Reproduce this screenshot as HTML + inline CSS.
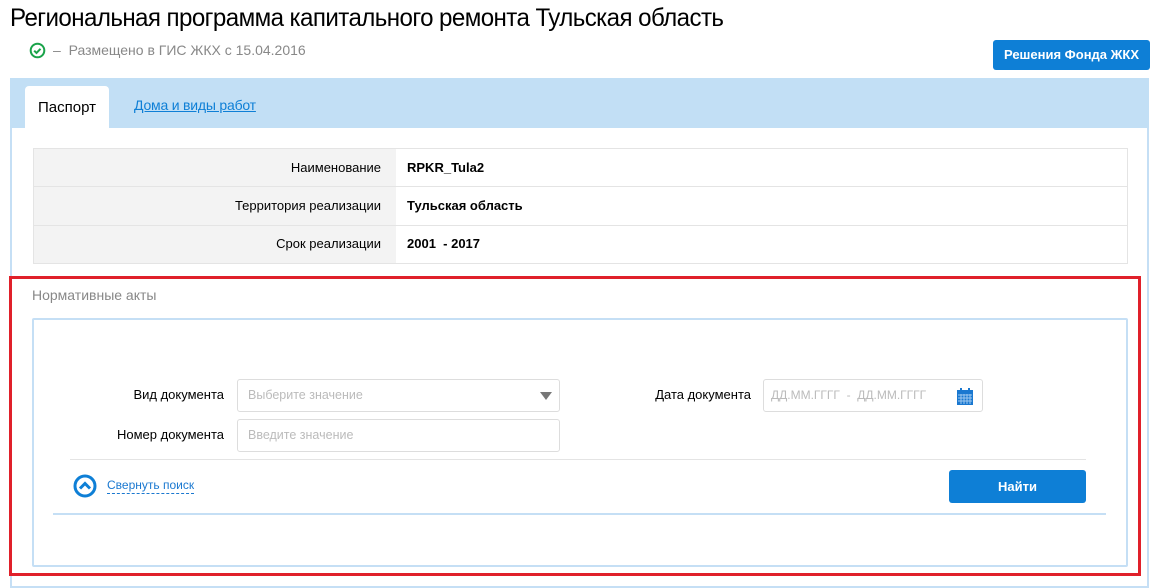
<!DOCTYPE html>
<html><head><meta charset="utf-8"><style>
*{box-sizing:border-box;margin:0;padding:0}
body{width:1160px;height:581px;overflow:hidden;background:#fff;font-family:"Liberation Sans",sans-serif;color:#000;position:relative}
.a{position:absolute}
</style></head><body>
<div class="a" style="left:10px;top:4px;font-size:25px;letter-spacing:-0.6px;transform:scaleX(0.965);transform-origin:left;white-space:nowrap">Региональная программа капитального ремонта Тульская область</div>
<svg class="a" style="left:29px;top:42px" width="17" height="17" viewBox="0 0 17 17"><circle cx="8.5" cy="8.5" r="6.8" fill="none" stroke="#1aa34a" stroke-width="2"/><path d="M5.2 8.7l2.3 2.3 4-4.2" fill="none" stroke="#1aa34a" stroke-width="2"/></svg>
<div class="a" style="left:53px;top:42px;font-size:14px;color:#888">– &nbsp;Размещено в ГИС ЖКХ с 15.04.2016</div>
<div class="a" style="left:993px;top:40px;width:157px;height:30px;background:#0e7fd6;border-radius:3px;color:#fff;font-size:13px;font-weight:bold;text-align:center;line-height:30px">Решения Фонда ЖКХ</div>
<div class="a" style="left:10px;top:78px;width:1139px;height:510px;border:2px solid #c5dff5;border-top:0;background:#fff"></div>
<div class="a" style="left:10px;top:78px;width:1139px;height:50px;background:#c2dff5"></div>
<div class="a" style="left:25px;top:86px;width:84px;height:43px;background:#fff;border-radius:4px 4px 0 0;font-size:15px;text-align:center;line-height:43px">Паспорт</div>
<div class="a" style="left:134px;top:97px;font-size:14px;color:#0e7fd6;text-decoration:underline;letter-spacing:-0.2px">Дома и виды работ</div>
<div class="a" style="left:33px;top:148px;width:1095px;height:116px;border:1px solid #e4e4e4"></div>
<div class="a" style="left:34px;top:149px;width:362px;height:114px;background:#f3f3f3"></div>
<div class="a" style="left:34px;top:186px;width:1093px;height:1px;background:#e4e4e4"></div>
<div class="a" style="left:34px;top:225px;width:1093px;height:1px;background:#e4e4e4"></div>
<div class="a" style="left:34px;top:159px;width:347px;text-align:right;font-size:13px;line-height:18px">Наименование<br><span style="display:block;margin-top:20px">Территория реализации</span><span style="display:block;margin-top:20px">Срок реализации</span></div>
<div class="a" style="left:407px;top:159px;font-size:13px;font-weight:bold;line-height:18px">RPKR_Tula2<br><span style="display:block;margin-top:20px">Тульская область</span><span style="display:block;margin-top:20px">2001 &nbsp;- 2017</span></div>
<div class="a" style="left:9px;top:276px;width:1132px;height:300px;border:3px solid #e0202a"></div>
<div class="a" style="left:32px;top:287px;font-size:14px;color:#888">Нормативные акты</div>
<div class="a" style="left:32px;top:318px;width:1096px;height:249px;border:2px solid #c5dff5;border-radius:2px"></div>
<div class="a" style="left:54px;top:387px;width:170px;text-align:right;font-size:13px">Вид документа</div>
<div class="a" style="left:54px;top:427px;width:170px;text-align:right;font-size:13px">Номер документа</div>
<div class="a" style="left:237px;top:379px;width:323px;height:33px;border:1px solid #ddd;border-radius:3px;font-size:12.5px;color:#bbb;padding:8px 10px">Выберите значение</div>
<div class="a" style="left:540px;top:392px;border-left:6px solid transparent;border-right:6px solid transparent;border-top:8px solid #777"></div>
<div class="a" style="left:237px;top:419px;width:323px;height:33px;border:1px solid #ddd;border-radius:3px;font-size:12.5px;color:#bbb;padding:8px 10px">Введите значение</div>
<div class="a" style="left:600px;top:387px;width:151px;text-align:right;font-size:13px">Дата документа</div>
<div class="a" style="left:763px;top:379px;width:220px;height:33px;border:1px solid #ddd;border-radius:3px;font-size:12px;color:#bbb;padding:8px 7px">ДД.ММ.ГГГГ &nbsp;- &nbsp;ДД.ММ.ГГГГ</div>
<svg class="a" style="left:957px;top:388px" width="16" height="17" viewBox="0 0 16 17"><rect x="0" y="2" width="16" height="15" fill="#1a78d0"/><rect x="3" y="0" width="2" height="4" fill="#1a78d0"/><rect x="11" y="0" width="2" height="4" fill="#1a78d0"/><path d="M1 7h14M1 10h14M1 13h14M4 6v10M7 6v10M10 6v10M13 6v10" stroke="#9cc8f0" stroke-width="1"/></svg>
<div class="a" style="left:70px;top:459px;width:1016px;height:1px;background:#e4e4e4"></div>
<svg class="a" style="left:73px;top:474px" width="24" height="24" viewBox="0 0 24 24"><circle cx="12" cy="12" r="10" fill="none" stroke="#0e7fd6" stroke-width="3"/><path d="M7 14.5l5-5 5 5" fill="none" stroke="#0e7fd6" stroke-width="3"/></svg>
<div class="a" style="left:107px;top:478px;font-size:12px;color:#1a78d0;border-bottom:1px dashed #1a78d0;line-height:15px">Свернуть поиск</div>
<div class="a" style="left:949px;top:470px;width:137px;height:33px;background:#0e7fd6;border-radius:3px;color:#fff;font-size:13px;font-weight:bold;text-align:center;line-height:33px">Найти</div>
<div class="a" style="left:53px;top:513px;width:1053px;height:2px;background:#c5dff5"></div>
</body></html>
